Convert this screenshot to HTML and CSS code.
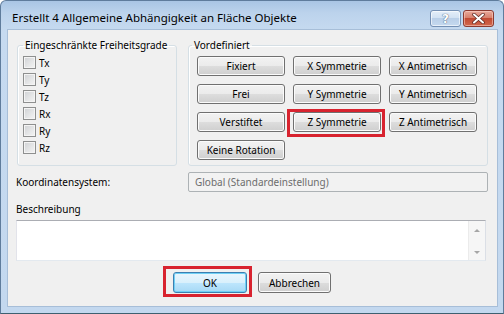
FILE: index.html
```html
<!DOCTYPE html>
<html lang="de">
<head>
  <meta charset="UTF-8">
  <title>Erstellt 4 Allgemeine Abhängigkeit an Fläche Objekte</title>
  <link rel="stylesheet" href="styles.css">
</head>
<body>
  <div class="window">
    <div class="titlebar">
      <span class="title">Erstellt 4 Allgemeine Abhängigkeit an Fläche Objekte</span>
      <div class="caption-buttons">
        <span class="cap-btn help">?</span>
        <span class="cap-btn close">
          <svg width="13" height="11" viewBox="0 0 13 11">
            <path d="M2 1.5 L11 9.5 M11 1.5 L2 9.5" stroke="#5a2620" stroke-width="3.4" stroke-linecap="round"/>
            <path d="M2 1.5 L11 9.5 M11 1.5 L2 9.5" stroke="#ffffff" stroke-width="2" stroke-linecap="round"/>
          </svg>
        </span>
      </div>
    </div>

    <div class="client">
      <div class="groups">
        <fieldset class="group dof">
          <legend>Eingeschränkte Freiheitsgrade</legend>
          <label class="check"><span class="box"></span>Tx</label>
          <label class="check"><span class="box"></span>Ty</label>
          <label class="check"><span class="box"></span>Tz</label>
          <label class="check"><span class="box"></span>Rx</label>
          <label class="check"><span class="box"></span>Ry</label>
          <label class="check"><span class="box"></span>Rz</label>
        </fieldset>

        <fieldset class="group presets">
          <legend>Vordefiniert</legend>
          <div class="preset-grid">
            <button class="btn">Fixiert</button>
            <button class="btn">X Symmetrie</button>
            <button class="btn">X Antimetrisch</button>
            <button class="btn">Frei</button>
            <button class="btn">Y Symmetrie</button>
            <button class="btn">Y Antimetrisch</button>
            <button class="btn">Verstiftet</button>
            <button class="btn marked marked-z">Z Symmetrie</button>
            <button class="btn">Z Antimetrisch</button>
            <button class="btn">Keine Rotation</button>
          </div>
        </fieldset>
      </div>

      <div class="coord-row">
        <span class="label">Koordinatensystem:</span>
        <div class="field disabled">Global (Standardeinstellung)</div>
      </div>

      <div class="desc-label">Beschreibung</div>
      <div class="memo">
        <div class="memo-text"></div>
        <div class="scrollbar">
          <span class="arrow up"></span>
          <span class="arrow down"></span>
        </div>
      </div>

      <div class="actions">
        <button class="btn default marked marked-ok">OK</button>
        <button class="btn cancel">Abbrechen</button>
      </div>
    </div>
  </div>
</body>
</html>
```

FILE: styles.css
```css
body {
  margin: 0;
  background-color: #ffffff;
  font-family: "Noto Sans", "Open Sans", sans-serif;
  font-size: 10px;
  color: #000000;
}

.window {
  width: 504px;
  height: 314px;
  box-sizing: border-box;
  padding: 0 6px 7px 7px;
  display: flex;
  flex-direction: column;
  background: linear-gradient(#a9c5e4 0px, #bcd3ec 12px, #c6daf0 30px, #c3d8ef 100%);
  border: 1px solid #5f7c9c;
  border-bottom-color: #3e6070;
  border-radius: 6px 6px 0 0;
}

.titlebar {
  height: 29px;
  display: flex;
  align-items: flex-start;
  justify-content: space-between;
}

.title {
  font-size: 11.5px;
  line-height: 14px;
  margin: 10px 0 0 4px;
  color: #000000;
}

.caption-buttons {
  display: flex;
  gap: 2px;
  margin: 9px 3px 0 0;
}

.cap-btn {
  width: 29px;
  height: 15px;
  border-radius: 3px;
  display: flex;
  align-items: center;
  justify-content: center;
}

.help {
  border: 1px solid #7490b4;
  background: linear-gradient(#e4eef9 0%, #d2e2f3 45%, #b9cfe8 50%, #c5d9ef 100%);
  box-shadow: inset 0 0 0 1px rgba(255, 255, 255, 0.6);
  color: #ffffff;
  font-family: "DejaVu Sans", sans-serif;
  font-weight: bold;
  font-size: 12px;
  text-shadow: 0 0 1px #4a5f7a, 0 0 1px #4a5f7a;
}

.close {
  border: 1px solid #8b3a30;
  background: linear-gradient(#e9a99b 0%, #d7806c 45%, #c24a33 50%, #d1674c 100%);
  box-shadow: inset 0 0 0 1px rgba(255, 220, 210, 0.5);
}

.client {
  flex: 1;
  background-color: #f0f0f0;
  padding: 8px 9px 0 8px;
  box-shadow: 0 0 0 1px #a7bed8;
  display: flex;
  flex-direction: column;
}

.groups {
  display: grid;
  grid-template-columns: 160px 300px;
  column-gap: 11px;
  margin-left: 1px;
}

.group {
  margin: 0;
  min-width: 0;
  border: 1px solid #d5dfe5;
  border-radius: 3px;
  box-shadow: inset 1px 1px 0 #ffffff;
}

.group legend {
  font-size: 10px;
  line-height: 14px;
  padding: 0 2px;
}

.dof {
  padding: 2px 5px 0 5px;
}

.dof legend {
  margin-left: 0;
}

.presets {
  padding: 4px 9px 5px 8px;
}

.presets legend {
  margin-left: -5px;
}

.check {
  height: 17px;
  display: flex;
  align-items: center;
  gap: 3px;
}

.box {
  width: 11px;
  height: 11px;
  border: 1px solid #8e8f8f;
  background: linear-gradient(135deg, #cfd1d4 0%, #e6e7e8 60%, #f4f4f4 100%);
  box-shadow: inset 0 0 0 1px #f4f4f4;
}

.preset-grid {
  display: grid;
  grid-template-columns: repeat(3, 88px);
  grid-auto-rows: 20px;
  column-gap: 8px;
  row-gap: 8px;
}

.btn {
  font-family: inherit;
  font-size: 10px;
  color: #000000;
  padding: 0;
  border: 1px solid #707070;
  border-radius: 3px;
  background: linear-gradient(#f2f2f2 0%, #ebebeb 50%, #dddddd 50%, #cfcfcf 100%);
  box-shadow: inset 0 0 0 1px #fbfbfb;
}

.marked {
  position: relative;
}

.marked::after {
  content: "";
  position: absolute;
  border: 3px solid #d8232f;
}

.marked-z::after {
  left: -7px;
  right: -5px;
  top: -4px;
  bottom: -6px;
}

.marked-ok::after {
  left: -11px;
  right: -6px;
  top: -7px;
  bottom: -5px;
}

.coord-row {
  display: grid;
  grid-template-columns: 172px 300px;
  align-items: center;
  margin-top: 6px;
}

.field {
  height: 18px;
  line-height: 18px;
  padding-left: 6px;
  border: 1px solid #adb2b5;
  border-radius: 2px;
}

.field.disabled {
  background-color: #f2f2f2;
  color: #6d6d6d;
}

.desc-label {
  line-height: 14px;
  margin-top: 10px;
}

.memo {
  height: 39px;
  margin: 4px 2px 0 0;
  display: flex;
  background-color: #ffffff;
  border: 1px solid #abadb3;
  border-color: #abadb3 #dbdfe6 #e3e9ef #e2e3ea;
}

.memo-text {
  flex: 1;
}

.scrollbar {
  width: 17px;
  display: flex;
  flex-direction: column;
  justify-content: space-between;
  align-items: center;
  padding: 8px 0 6px;
  box-sizing: border-box;
  background-color: #f6f6f6;
  border-left: 1px solid #ebebeb;
}

.arrow {
  width: 0;
  height: 0;
  border-left: 3px solid transparent;
  border-right: 3px solid transparent;
}

.arrow.up {
  border-bottom: 3px solid #a6a6a6;
}

.arrow.down {
  border-top: 3px solid #a6a6a6;
}

.actions {
  display: flex;
  justify-content: center;
  gap: 11px;
  margin-top: 11px;
}

.actions .btn {
  height: 21px;
}

.default {
  width: 74px;
  border-color: #3c7fb1;
  background: linear-gradient(#eaf6fd 0%, #d9f0fc 50%, #bee6fd 50%, #a7d9f5 100%);
  box-shadow: inset 0 0 0 1px #6fd0f5;
}

.cancel {
  width: 73px;
}
```
